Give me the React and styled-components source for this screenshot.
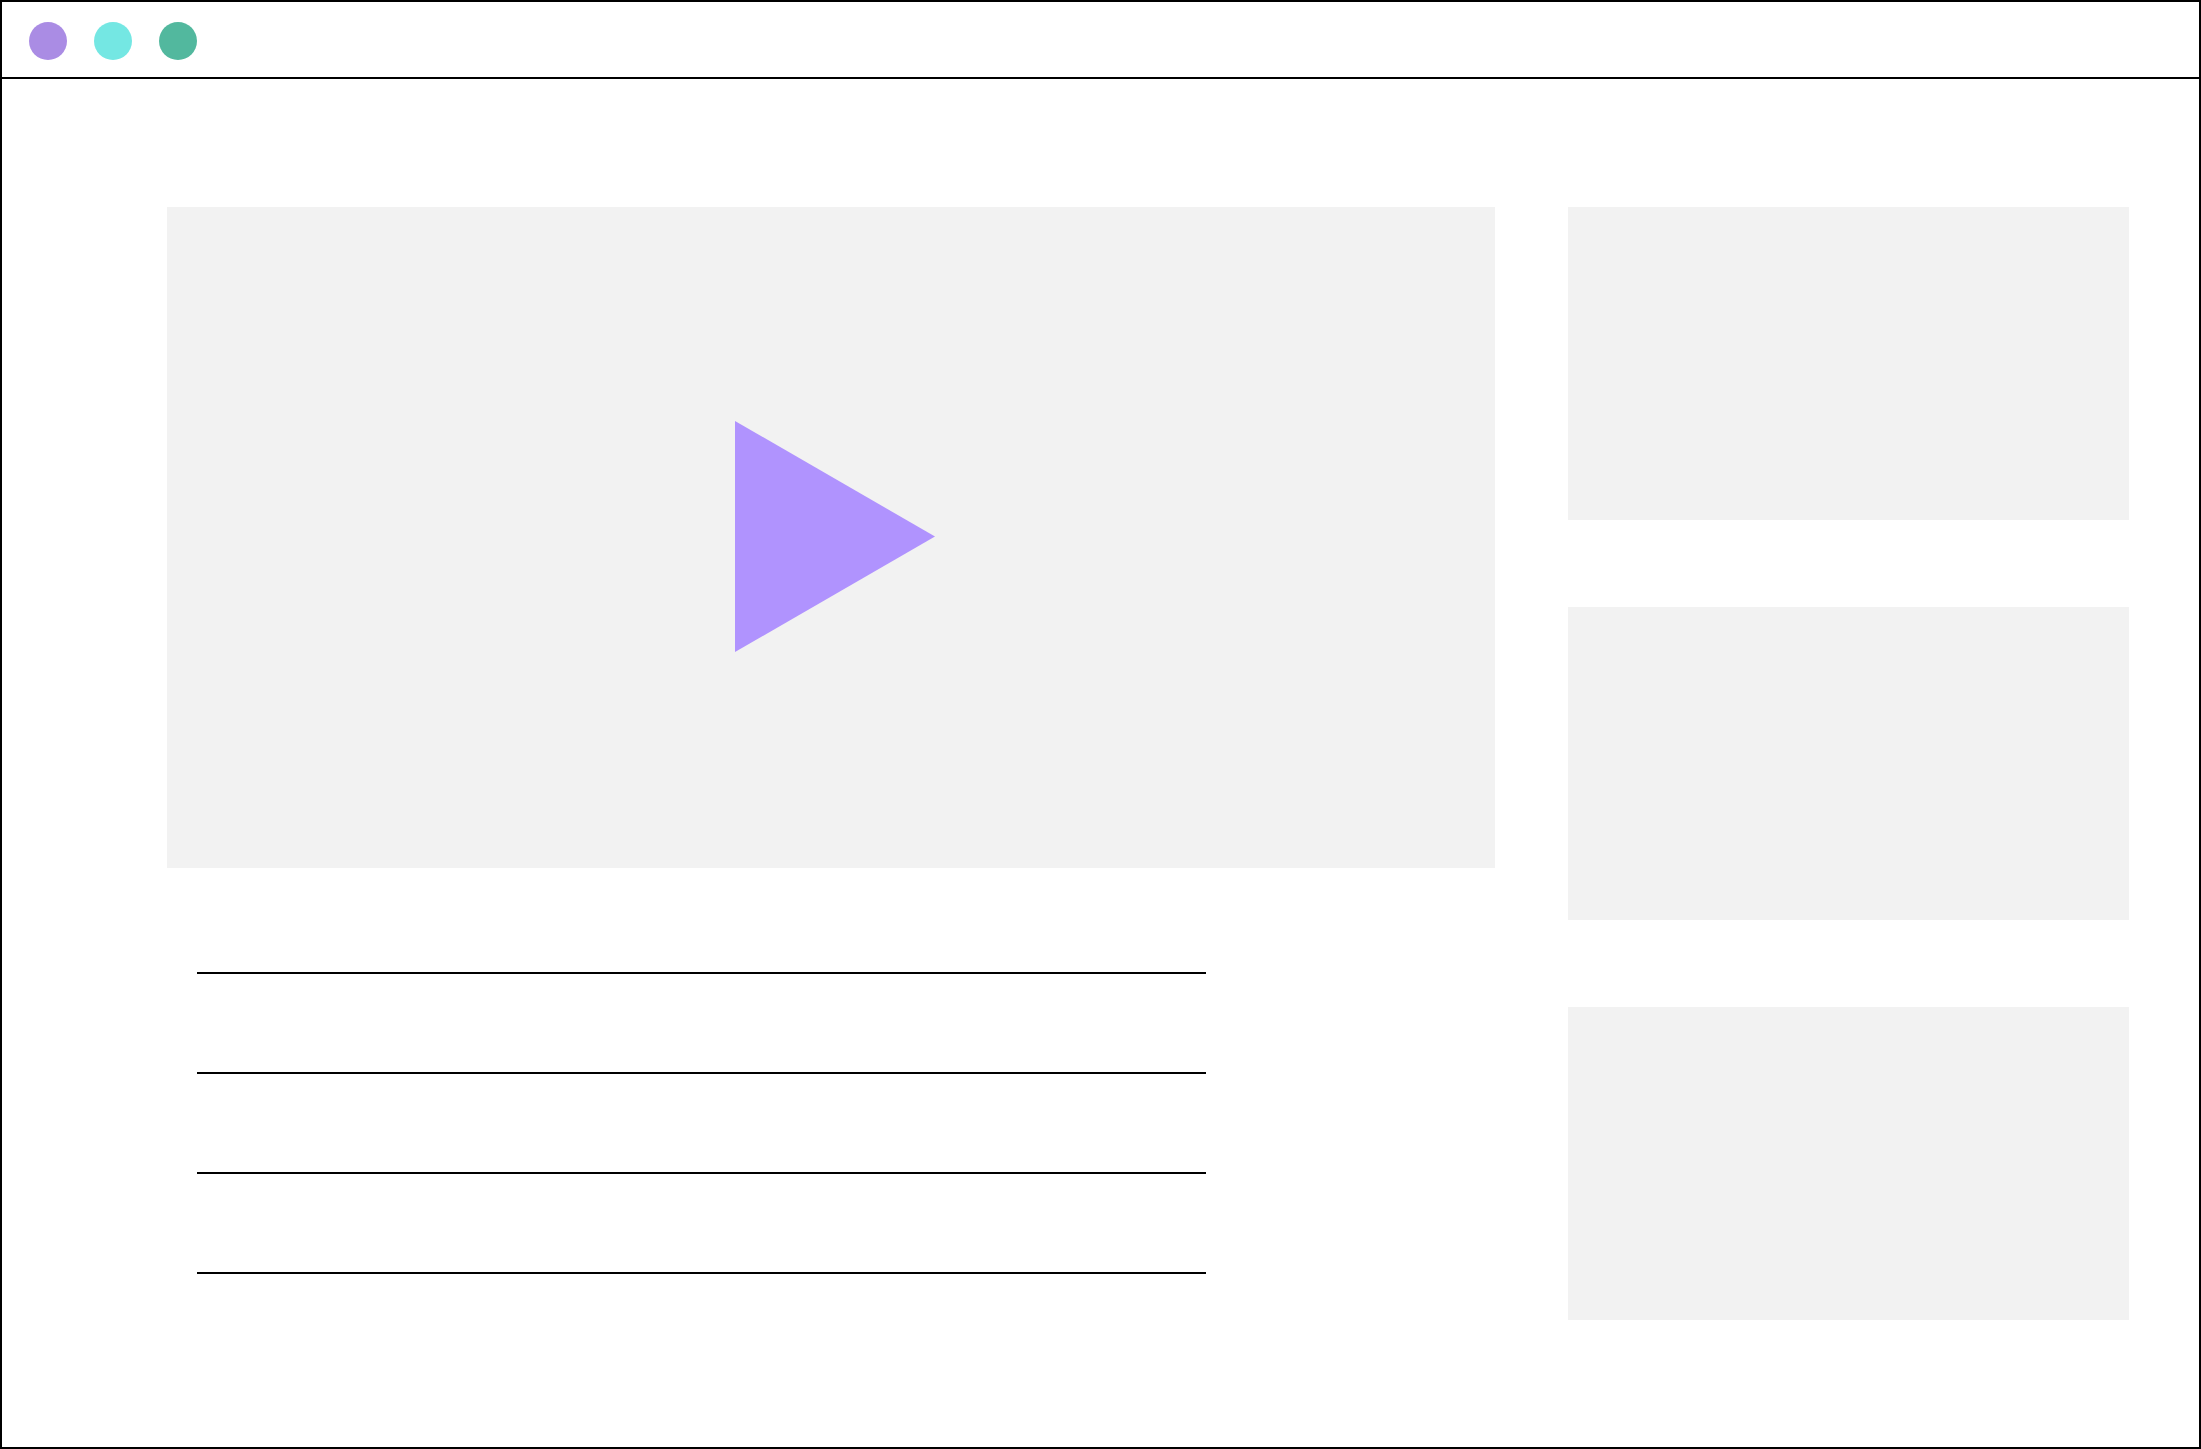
import React from "react";
import styled, { createGlobalStyle } from "styled-components";

const GlobalStyle = createGlobalStyle`
  *, *::before, *::after { box-sizing: border-box; }
  body { margin: 0; background: #fff; font-family: "Liberation Sans", Arial, sans-serif; }
`;

const Window = styled.div`
  display: flex;
  flex-direction: column;
  min-height: 100vh;
  border: 2px solid #000;
  background: #fff;
`;

const TitleBar = styled.header`
  display: flex;
  gap: 27px;
  padding: 20px 27px 17px;
  border-bottom: 2px solid #000;
`;

const WindowDot = styled.button`
  width: 38px;
  height: 38px;
  padding: 0;
  border: 0;
  border-radius: 50%;
  background: ${({ $color }) => $color};
  cursor: pointer;
`;

const Content = styled.main`
  display: grid;
  grid-template-columns: minmax(0, 1328fr) minmax(0, 561fr);
  align-items: start;
  column-gap: 73px;
  padding: 128px 70px 80px 165px;
`;

const VideoPanel = styled.section`
  display: flex;
  align-items: center;
  justify-content: center;
  aspect-ratio: 1328 / 661;
  padding: 0 0 2px 8px;
  background: #f2f2f2;
`;

const PlayButton = styled.button`
  display: block;
  padding: 0;
  border: 0;
  background: none;
  cursor: pointer;

  svg {
    display: block;
  }
`;

const Description = styled.div`
  display: flex;
  flex-direction: column;
  gap: 98px;
  width: 76%;
  margin: 104px 0 0 30px;
`;

const TextLine = styled.div`
  height: 2px;
  background: #000;
`;

const Sidebar = styled.aside`
  display: flex;
  flex-direction: column;
  gap: 87px;
`;

const Thumbnail = styled.div`
  aspect-ratio: 561 / 313;
  background: #f2f2f2;
`;

const controls = [
  { label: "Close", color: "#aa8ce4" },
  { label: "Minimize", color: "#74e7e3" },
  { label: "Maximize", color: "#52b89e" },
];

export default function App() {
  return (
    <>
      <GlobalStyle />
      <Window>
        <TitleBar>
          {controls.map(({ label, color }) => (
            <WindowDot key={label} type="button" aria-label={label} $color={color} />
          ))}
        </TitleBar>
        <Content>
          <div>
            <VideoPanel aria-label="Video">
              <PlayButton type="button" aria-label="Play">
                <svg width="200" height="231" viewBox="0 0 200 231" aria-hidden="true">
                  <path d="M0 0L200 115.5L0 231Z" fill="#b093fe" />
                </svg>
              </PlayButton>
            </VideoPanel>
            <Description>
              <TextLine />
              <TextLine />
              <TextLine />
              <TextLine />
            </Description>
          </div>
          <Sidebar>
            <Thumbnail />
            <Thumbnail />
            <Thumbnail />
          </Sidebar>
        </Content>
      </Window>
    </>
  );
}
